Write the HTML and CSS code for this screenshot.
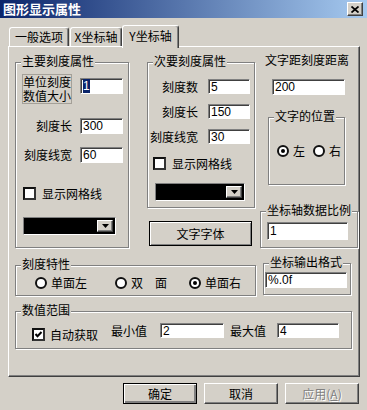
FILE: index.html
```html
<!DOCTYPE html>
<html>
<head>
    <meta charset="utf-8">
    <title>图形显示属性</title>
    <link rel="stylesheet" href="styles.css">
</head>
<body>
    <div class="dialog">
        <div class="titlebar">
            <span class="title">图形显示属性</span>
            <span class="close-btn">
                <svg width="8" height="7" viewBox="0 0 8 7"><path d="M0.5 0.5 L7.5 6.5 M7.5 0.5 L0.5 6.5" stroke="#000" stroke-width="1.7"/></svg>
            </span>
        </div>

        <div class="tabs">
            <div class="tab tab-general">一般选项</div>
            <div class="tab tab-x">X坐标轴</div>
            <div class="tab tab-y active">Y坐标轴</div>
        </div>

        <div class="panel">
            <div class="top-row">
                <!-- 主要刻度 -->
                <div class="col-main">
                    <div class="group group-main">
                        <span class="legend">主要刻度属性</span>
                        <div class="field-row unit-row">
                            <div class="unit-label">单位刻度<br>数值大小</div>
                            <div class="edit edit-main"><span class="sel">1</span></div>
                        </div>
                        <div class="field-row main-row">
                            <span class="field-label">刻度长</span>
                            <div class="edit edit-main">300</div>
                        </div>
                        <div class="field-row main-row gap-13">
                            <span class="field-label">刻度线宽</span>
                            <div class="edit edit-main">60</div>
                        </div>
                        <div class="check-item main-check">
                            <span class="check"></span>
                            <span>显示网格线</span>
                        </div>
                        <div class="combo main-combo">
                            <span class="combo-btn"><svg width="7" height="4" viewBox="0 0 7 4"><path d="M0 0h7L3.5 4z" fill="#000"/></svg></span>
                        </div>
                    </div>
                </div>

                <!-- 次要刻度 -->
                <div class="col-minor">
                    <div class="group group-minor">
                        <span class="legend">次要刻度属性</span>
                        <div class="field-row minor-row first">
                            <span class="field-label">刻度数</span>
                            <div class="edit edit-minor">5</div>
                        </div>
                        <div class="field-row minor-row">
                            <span class="field-label">刻度长</span>
                            <div class="edit edit-minor">150</div>
                        </div>
                        <div class="field-row minor-row">
                            <span class="field-label">刻度线宽</span>
                            <div class="edit edit-minor">30</div>
                        </div>
                        <div class="check-item minor-check">
                            <span class="check"></span>
                            <span>显示网格线</span>
                        </div>
                        <div class="combo minor-combo">
                            <span class="combo-btn"><svg width="7" height="4" viewBox="0 0 7 4"><path d="M0 0h7L3.5 4z" fill="#000"/></svg></span>
                        </div>
                    </div>
                    <button class="btn btn-font">文字字体</button>
                </div>

                <!-- 右侧 -->
                <div class="col-side">
                    <div class="side-caption">文字距刻度距离</div>
                    <div class="edit edit-dist">200</div>
                    <div class="group group-pos">
                        <span class="legend">文字的位置</span>
                        <div class="radio-row">
                            <span class="radio-item"><span class="radio checked"></span>左</span>
                            <span class="radio-item"><span class="radio"></span>右</span>
                        </div>
                    </div>
                    <div class="group group-ratio">
                        <span class="legend">坐标轴数据比例</span>
                        <div class="edit edit-ratio">1</div>
                    </div>
                </div>
            </div>

            <div class="mid-row">
                <div class="group group-ticks">
                    <span class="legend">刻度特性</span>
                    <div class="ticks-grid">
                        <span class="radio-item"><span class="radio"></span>单面左</span>
                        <span class="radio-item"><span class="radio"></span>双　面</span>
                        <span class="radio-item"><span class="radio checked"></span>单面右</span>
                    </div>
                </div>
                <div class="group group-format">
                    <span class="legend">坐标输出格式</span>
                    <div class="edit edit-format">%.0f</div>
                </div>
            </div>

            <div class="group group-range">
                <span class="legend">数值范围</span>
                <div class="range-row">
                    <div class="check-item range-check">
                        <span class="check checked">
                            <svg width="9" height="9" viewBox="0 0 9 9"><path d="M1.5 4 L3.5 6.2 L7.5 2" fill="none" stroke="#000" stroke-width="2"/></svg>
                        </span>
                        <span>自动获取</span>
                    </div>
                    <span class="range-label min-label">最小值</span>
                    <div class="edit edit-min">2</div>
                    <span class="range-label max-label">最大值</span>
                    <div class="edit edit-max">4</div>
                </div>
            </div>
        </div>

        <div class="buttons">
            <button class="btn btn-default">确定</button>
            <button class="btn">取消</button>
            <button class="btn" disabled>应用(<u>A</u>)</button>
        </div>
    </div>
</body>
</html>
```

FILE: styles.css
```css
* {
    box-sizing: border-box;
}
body {
    margin: 0;
    background-color: #d4d0c8;
    font-family: "Noto Sans CJK SC", "Liberation Sans", sans-serif;
    font-size: 12px;
    line-height: 14px;
    color: #000;
}
.dialog {
    width: 367px;
    height: 410px;
    background-color: #d4d0c8;
}

/* title bar */
.titlebar {
    height: 18px;
    display: flex;
    align-items: center;
    justify-content: space-between;
    padding: 0 4px 0 3px;
    background: linear-gradient(to right, #0a246a, #a6caf0);
}
.title {
    color: white;
    font-weight: bold;
    font-size: 13px;
}
.close-btn {
    width: 16px;
    height: 14px;
    display: flex;
    align-items: center;
    justify-content: center;
    background-color: #d4d0c8;
    border: 1px solid;
    border-color: #fff #404040 #404040 #fff;
    box-shadow: inset -1px -1px #808080;
}

/* tabs */
.tabs {
    height: 28px;
    display: flex;
    align-items: flex-end;
    padding-left: 9px;
}
.tab {
    height: 19px;
    line-height: 17px;
    text-align: center;
    background-color: #d4d0c8;
    border-top: 1px solid #fff;
    border-left: 1px solid #fff;
    border-right: 1px solid #404040;
    box-shadow: inset -1px 0 #808080;
    border-radius: 3px 3px 0 0;
}
.tab-general {
    width: 60px;
}
.tab-x {
    width: 52px;
    margin-left: 1px;
}
.tab.active {
    width: 57px;
    height: 23px;
    line-height: 19px;
    margin-bottom: -2px;
    position: relative;
    z-index: 1;
}

/* tab panel */
.panel {
    margin-left: 8px;
    width: 352px;
    height: 331px;
    border: 1px solid;
    border-color: #fff #404040 #404040 #fff;
    box-shadow: inset -1px -1px #808080;
    padding: 6px 0 0 6px;
}

/* group box */
.group {
    position: relative;
    border: 1px solid #808080;
    box-shadow: inset 1px 1px #fff, 1px 1px #fff;
}
.legend {
    position: absolute;
    top: -9px;
    left: 5px;
    padding: 0 1px;
    background-color: #d4d0c8;
    white-space: nowrap;
}

/* edit box */
.edit {
    height: 16px;
    background-color: white;
    border: 1px solid;
    border-color: #808080 #fff #fff #808080;
    box-shadow: inset 1px 1px #404040;
    padding-left: 2px;
    font-family: "Liberation Sans", "Noto Sans CJK SC", sans-serif;
    line-height: 14px;
    white-space: nowrap;
}
.sel {
    background-color: #0a246a;
    color: white;
}

/* check & radio */
.check {
    width: 13px;
    height: 13px;
    flex-shrink: 0;
    display: flex;
    align-items: center;
    justify-content: center;
    background-color: white;
    border: 2px solid;
    border-color: #111 #333 #333 #111;
}
.check-item {
    display: flex;
    align-items: center;
    gap: 6px;
    height: 13px;
}
.radio {
    width: 12px;
    height: 12px;
    flex-shrink: 0;
    border: 2px solid #111;
    border-radius: 50%;
    background-color: white;
    display: flex;
    align-items: center;
    justify-content: center;
}
.radio.checked::after {
    content: "";
    width: 4px;
    height: 4px;
    border-radius: 50%;
    background-color: #000;
}
.radio-item {
    display: flex;
    align-items: center;
    gap: 4px;
    height: 12px;
}

/* combo */
.combo {
    height: 18px;
    display: flex;
    justify-content: flex-end;
    padding: 2px 2px 2px 0;
    background-color: #000;
    border: 1px solid;
    border-color: #808080 #fff #fff #808080;
}
.combo-btn {
    width: 16px;
    display: flex;
    align-items: center;
    justify-content: center;
    background-color: #d4d0c8;
    border: 1px solid;
    border-color: #fff #404040 #404040 #fff;
    box-shadow: inset -1px -1px #808080;
}

/* buttons */
.btn {
    width: 74px;
    height: 21px;
    padding: 0;
    font-family: inherit;
    font-size: 12px;
    color: #000;
    background-color: #d4d0c8;
    border: 1px solid;
    border-color: #fff #404040 #404040 #fff;
    box-shadow: inset -1px -1px #808080;
}
.btn-default {
    border-color: #000;
    box-shadow: inset 1px 1px #fff, inset -2px -2px #808080;
}
.btn:disabled {
    color: #808080;
    text-shadow: 1px 1px #fff;
}

/* top area */
.top-row {
    display: flex;
    align-items: flex-start;
}
.field-row {
    display: flex;
    align-items: center;
}
.field-label {
    width: 50px;
    text-align: right;
    white-space: nowrap;
}

.col-main {
    width: 114px;
    margin-top: 9px;
}
.group-main {
    height: 186px;
    padding: 11px 0 0 6px;
}
.unit-row {
    align-items: flex-start;
}
.unit-label {
    width: 50px;
    height: 30px;
    border: 1px solid #a4a098;
    line-height: 14px;
    white-space: nowrap;
}
.edit-main {
    width: 43px;
    margin-left: 8px;
}
.unit-row .edit-main {
    margin-top: 4px;
}
.main-row {
    margin-top: 14px;
}
.main-row.gap-13 {
    margin-top: 13px;
}
.main-check {
    margin: 24px 0 0 1px;
}
.main-combo {
    width: 93px;
    margin: 17px 0 0 1px;
}

.col-minor {
    width: 108px;
    margin: 9px 0 0 18px;
}
.group-minor {
    height: 146px;
    padding-top: 6px;
}
.minor-row {
    margin-top: 10px;
}
.edit-minor {
    width: 42px;
    height: 15px;
    margin-left: 10px;
}
.minor-check {
    margin: 13px 0 0 5px;
}
.minor-combo {
    width: 90px;
    margin: 13px 0 0 7px;
}
.btn-font {
    width: 103px;
    height: 25px;
    margin: 13px 0 0 2px;
    border-color: #000;
    box-shadow: inset 1px 1px #fff, inset -1px -1px #808080;
}

.col-side {
    width: 98px;
    margin-left: 5px;
}
.side-caption {
    padding-left: 5px;
    white-space: nowrap;
}
.edit-dist {
    width: 73px;
    margin: 12px 0 0 12px;
}
.group-pos {
    width: 77px;
    height: 68px;
    margin: 22px 0 0 8px;
    padding: 27px 0 0 8px;
}
.radio-row {
    display: flex;
    gap: 8px;
}
.group-ratio {
    width: 98px;
    height: 37px;
    margin-top: 26px;
    padding: 10px 0 0 6px;
}
.edit-ratio {
    width: 81px;
    height: 18px;
    line-height: 16px;
}

/* middle area */
.mid-row {
    display: flex;
    align-items: flex-start;
    margin-top: 15px;
}
.group-ticks {
    width: 241px;
    height: 31px;
    margin-top: 2px;
    padding: 11px 0 0 19px;
}
.ticks-grid {
    display: grid;
    grid-template-columns: 80px 74px auto;
}
.group-format {
    width: 88px;
    height: 32px;
    margin-left: 7px;
    padding: 8px 0 0 1px;
}
.edit-format {
    width: 82px;
}

/* range */
.group-range {
    width: 337px;
    height: 38px;
    margin-top: 15px;
    padding: 11px 0 0 16px;
}
.range-row {
    display: flex;
    align-items: flex-start;
}
.range-check {
    margin-top: 5px;
    gap: 5px;
}
.range-label {
    margin-top: 1px;
}
.min-label {
    margin-left: 13px;
}
.max-label {
    margin-left: 6px;
}
.edit-min {
    width: 64px;
    height: 15px;
    margin-left: 13px;
}
.edit-max {
    width: 62px;
    height: 15px;
    margin-left: 11px;
}

/* bottom buttons */
.buttons {
    width: 352px;
    margin: 6px 0 0 8px;
    padding-right: 1px;
    display: flex;
    justify-content: flex-end;
    gap: 7px;
}
```
